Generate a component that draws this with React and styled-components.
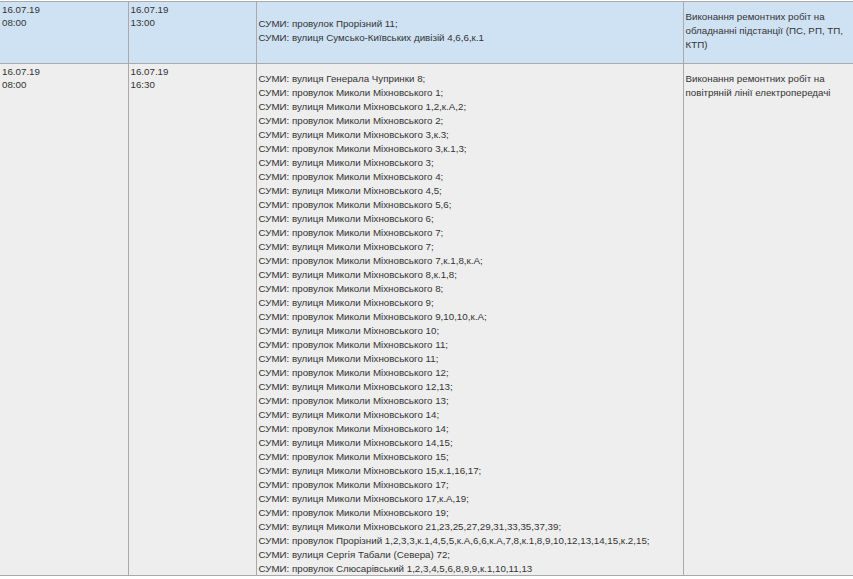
import React from "react";
import styled, { createGlobalStyle } from "styled-components";

const Global = createGlobalStyle`
  html, body { margin: 0; padding: 0; background: #fff; }
  body { width: 853px; height: 579px; overflow: hidden; font-family: "Liberation Sans", Arial, sans-serif; }
`;

const Table = styled.table`
  border-collapse: collapse;
  table-layout: fixed;
  width: 854px;
  margin-top: 1px;
  font-size: 9.75px;
  color: #333;
`;

const Col = styled.col`
  width: ${(p) => p.$w}px;
`;

const Row = styled.tr`
  background: ${(p) => (p.$alt ? "#cfe2f3" : "#eeeeee")};
  height: ${(p) => p.$h}px;
`;

const Cell = styled.td`
  border: 1px solid #aaaaaa;
  padding: 0 2px;
  vertical-align: top;
  line-height: 14px;
  &:first-child { border-left: 0; }
  &:last-child { border-right: 0; }
`;

const DateCell = styled(Cell)`
  padding-top: 1px;
  line-height: 13px;
`;

const AddressCell = styled(Cell)`
  padding-top: ${(p) => (p.$first ? "15px" : "8px")};
`;

const WorkCell = styled(Cell)`
  padding-top: 8px;
`;

const AddressList = styled.div`
  margin-bottom: -1px;
`;

const Line = styled.div`
  white-space: nowrap;
`;

const P = "провулок Миколи Міхновського";
const V = "вулиця Миколи Міхновського";
const addresses = [
  "вулиця Генерала Чупринки 8;",
  `${P} 1;`,
  `${V} 1,2,к.А,2;`,
  `${P} 2;`,
  `${V} 3,к.3;`,
  `${P} 3,к.1,3;`,
  `${V} 3;`,
  `${P} 4;`,
  `${V} 4,5;`,
  `${P} 5,6;`,
  `${V} 6;`,
  `${P} 7;`,
  `${V} 7;`,
  `${P} 7,к.1,8,к.А;`,
  `${V} 8,к.1,8;`,
  `${P} 8;`,
  `${V} 9;`,
  `${P} 9,10,10,к.А;`,
  `${V} 10;`,
  `${P} 11;`,
  `${V} 11;`,
  `${P} 12;`,
  `${V} 12,13;`,
  `${P} 13;`,
  `${V} 14;`,
  `${P} 14;`,
  `${V} 14,15;`,
  `${P} 15;`,
  `${V} 15,к.1,16,17;`,
  `${P} 17;`,
  `${V} 17,к.А,19;`,
  `${P} 19;`,
  `${V} 21,23,25,27,29,31,33,35,37,39;`,
  "провулок Прорізний 1,2,3,3,к.1,4,5,5,к.А,6,6,к.А,7,8,к.1,8,9,10,12,13,14,15,к.2,15;",
  "вулиця Сергія Табали (Севера) 72;",
  "провулок Слюсарівський 1,2,3,4,5,6,8,9,9,к.1,10,11,13",
];

export default function App() {
  return (
    <>
      <Global />
      <Table>
        <colgroup>
          <Col $w={128} />
          <Col $w={128} />
          <Col $w={427} />
          <Col $w={171} />
        </colgroup>
        <tbody>
          <Row $alt $h={62}>
            <DateCell>16.07.19<br />08:00</DateCell>
            <DateCell>16.07.19<br />13:00</DateCell>
            <AddressCell $first>
              <Line>СУМИ: провулок Прорізний 11;</Line>
              <Line>СУМИ: вулиця Сумсько-Київських дивізій 4,6,6,к.1</Line>
            </AddressCell>
            <WorkCell>Виконання ремонтних робіт на обладнанні підстанції (ПС, РП, ТП, КТП)</WorkCell>
          </Row>
          <Row $h={512}>
            <DateCell>16.07.19<br />08:00</DateCell>
            <DateCell>16.07.19<br />16:30</DateCell>
            <AddressCell>
              <AddressList>
                {addresses.map((a) => (
                  <Line key={a}>СУМИ: {a}</Line>
                ))}
              </AddressList>
            </AddressCell>
            <WorkCell>Виконання ремонтних робіт на повітряній лінії електропередачі</WorkCell>
          </Row>
        </tbody>
      </Table>
    </>
  );
}
